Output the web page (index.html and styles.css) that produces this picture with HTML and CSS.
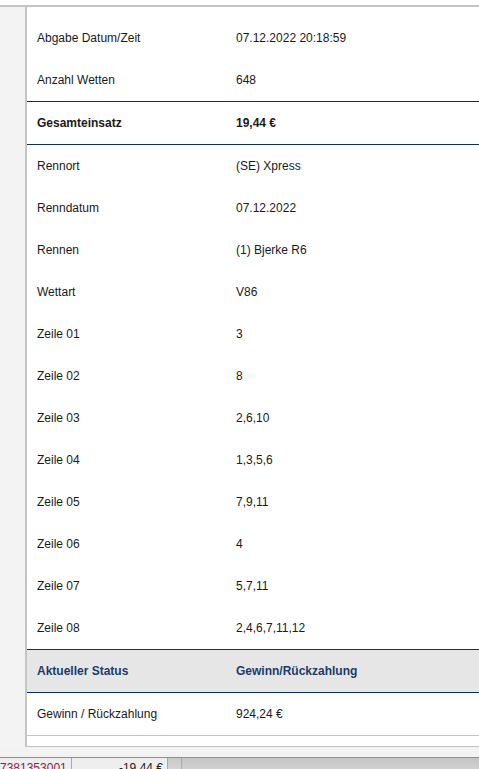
FILE: index.html
```html
<!DOCTYPE html>
<html lang="de">
<head>
<meta charset="utf-8">
<title>Wettdetails</title>
<link rel="stylesheet" href="styles.css">
</head>
<body>
<div class="topgap"></div>
<div class="main">
  <div class="side"></div>
  <div class="panel">
    <div class="details">
      <div class="section">
        <div class="row"><span class="lbl">Abgabe Datum/Zeit</span><span class="val">07.12.2022 20:18:59</span></div>
        <div class="row"><span class="lbl">Anzahl Wetten</span><span class="val">648</span></div>
      </div>
      <div class="section">
        <div class="row bold"><span class="lbl">Gesamteinsatz</span><span class="val">19,44 €</span></div>
      </div>
      <div class="section">
        <div class="row"><span class="lbl">Rennort</span><span class="val">(SE) Xpress</span></div>
        <div class="row"><span class="lbl">Renndatum</span><span class="val">07.12.2022</span></div>
        <div class="row"><span class="lbl">Rennen</span><span class="val">(1) Bjerke R6</span></div>
        <div class="row"><span class="lbl">Wettart</span><span class="val">V86</span></div>
        <div class="row"><span class="lbl">Zeile 01</span><span class="val">3</span></div>
        <div class="row"><span class="lbl">Zeile 02</span><span class="val">8</span></div>
        <div class="row"><span class="lbl">Zeile 03</span><span class="val">2,6,10</span></div>
        <div class="row"><span class="lbl">Zeile 04</span><span class="val">1,3,5,6</span></div>
        <div class="row"><span class="lbl">Zeile 05</span><span class="val">7,9,11</span></div>
        <div class="row"><span class="lbl">Zeile 06</span><span class="val">4</span></div>
        <div class="row"><span class="lbl">Zeile 07</span><span class="val">5,7,11</span></div>
        <div class="row"><span class="lbl">Zeile 08</span><span class="val">2,4,6,7,11,12</span></div>
      </div>
      <div class="section head">
        <div class="row"><span class="lbl">Aktueller Status</span><span class="val">Gewinn/Rückzahlung</span></div>
      </div>
      <div class="section last">
        <div class="row"><span class="lbl">Gewinn / Rückzahlung</span><span class="val">924,24 €</span></div>
      </div>
    </div>
  </div>
</div>
<div class="strip"></div>
<div class="gridrow">
  <div class="cell c1">7381353001</div>
  <div class="cell c2">-19,44 €</div>
  <div class="cell c3"></div>
  <div class="rest"></div>
</div>
</body>
</html>
```

FILE: styles.css
```css
html, body {
  margin: 0;
  padding: 0;
  background: #ffffff;
  font-family: "Liberation Sans", Arial, sans-serif;
  font-size: 12px;
  color: #1a1a1a;
  overflow: hidden;
  height: 769px;
}

.topgap {
  height: 5px;
  background: #ffffff;
  border-bottom: 2px solid #c4c4c4;
}

.main {
  display: flex;
  background: #f3f3f3;
}

.side {
  width: 25px;
  flex: none;
}

.panel {
  flex: 1;
  background: #ffffff;
  border-left: 2px solid #c4c4c4;
  border-bottom: 1px solid #c4c4c4;
  padding: 10px 0 10px 0;
}

.details {
  border-bottom: 1px solid #c4c4c4;
}

.section {
  border-bottom: 1px solid #0e2f63;
}

.section.last {
  border-bottom: none;
}

.row {
  display: grid;
  grid-template-columns: 209px 1fr;
  height: 42px;
  align-items: center;
  line-height: 14px;
}

.lbl {
  padding-left: 10px;
}

.bold {
  font-weight: bold;
}

.head {
  background: #e6e6e6;
}

.head .row {
  font-weight: bold;
  color: #1b3b6c;
}

.strip {
  height: 10px;
  background: #f2f2f2;
}

.gridrow {
  display: flex;
  height: 12px;
  border-top: 1px solid #8f8f8f;
  overflow: visible;
}

.cell {
  box-sizing: border-box;
  height: 20px;
  background: #eeeeee;
  border-right: 1px solid #a9a9a9;
  padding-top: 3px;
  text-align: right;
  line-height: 14px;
  white-space: nowrap;
}

.c1 {
  width: 72px;
  padding-right: 5px;
  color: #8a1f47;
}

.c2 {
  width: 96px;
  padding-right: 4px;
  color: #222222;
}

.c3 {
  width: 14px;
  background: linear-gradient(#c9c9c9, #dedede);
}

.rest {
  flex: 1;
  height: 20px;
  background: linear-gradient(#c4c4c4, #dcdcdc);
}
```
